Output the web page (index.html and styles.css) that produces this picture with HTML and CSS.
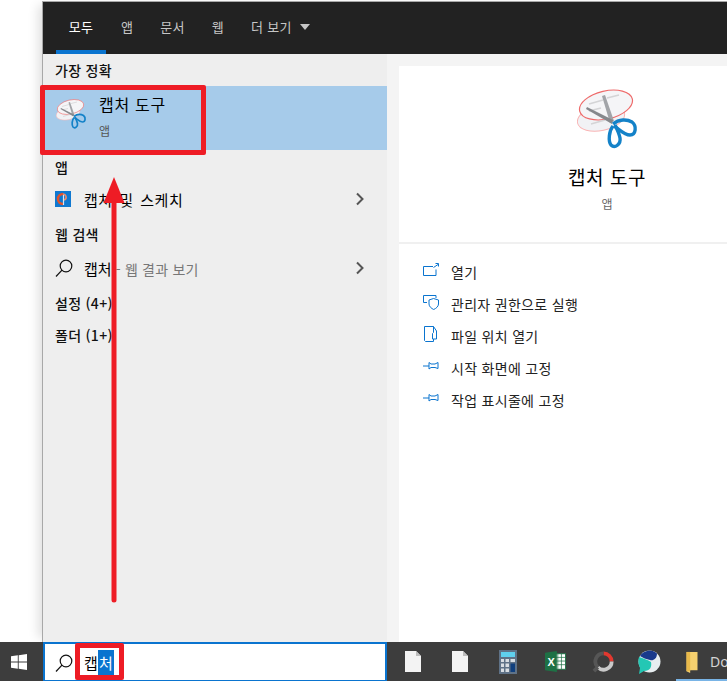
FILE: index.html
```html
<!DOCTYPE html>
<html lang="ko">
<head>
<meta charset="utf-8">
<title>캡처 도구</title>
<link rel="stylesheet" href="styles.css">
</head>
<body>
<svg width="0" height="0" class="defs">
  <defs>
    <symbol id="snip" viewBox="0 0 62 62">
      <ellipse cx="24" cy="29" rx="24" ry="12.500" transform="rotate(-12 24 29)" fill="#f1f2f5" stroke="#f9b4b4" stroke-width="1"/>
      <ellipse cx="29" cy="16" rx="27" ry="14" transform="rotate(-13 29 16)" fill="#f5f5f7" stroke="#ee6a6a" stroke-width="1.200"/>
      <path d="M12 15 26 11M30 9 42 6M12 22 24 19M14 35 28 31" stroke="#d4d4d6" stroke-width="1.500" fill="none"/>
      <path d="M25 7 28 6 37 32 33 34Z" fill="#a2a4a8"/>
      <path d="M9 20 10 18 36 31 35 35Z" fill="#86888c"/>
      <path d="M36 35C42 30 50 30 55 33 60 37 59 46 53 46 47 46 42 40 37 37" fill="none" stroke="#1482c8" stroke-width="3.400"/>
      <path d="M36 37C32 42 31 52 34 56 38 60 44 55 43 49 42 44 40 40 38 36" fill="none" stroke="#1482c8" stroke-width="3.400"/>
    </symbol>
    <symbol id="glass" viewBox="0 0 18 18">
      <circle cx="11" cy="7" r="5.800" fill="none" stroke="currentColor" stroke-width="1.200"/>
      <path d="M7 11.200 1 17.500" fill="none" stroke="currentColor" stroke-width="1.200"/>
    </symbol>
    <symbol id="chev" viewBox="0 0 10 14">
      <path d="M2 1.500 7.500 7 2 12.500" fill="none" stroke="currentColor" stroke-width="2"/>
    </symbol>
    <symbol id="pin" viewBox="0 0 16 16">
      <path d="M0 8H6M6 4.500 8 6H12L15 4.500V10.500L12 9.500H8L6 11Z" fill="none" stroke="currentColor" stroke-width="1"/>
    </symbol>
    <symbol id="doc" viewBox="0 0 16 21">
      <path d="M0 0H11L16 5V21H0Z" fill="#f3f3f3"/>
      <path d="M11 0 16 5H11Z" fill="#bdbdbd"/>
    </symbol>
  </defs>
</svg>

<div class="stage">
  <div class="margin"></div>
  <main class="panel">
    <nav class="tabs">
      <a class="tab tab-on">모두</a>
      <a class="tab">앱</a>
      <a class="tab">문서</a>
      <a class="tab">웹</a>
      <a class="tab">더 보기 <span class="caret"></span></a>
    </nav>
    <div class="panes">
      <section class="results">
        <h2 class="head head-first">가장 정확</h2>
        <div class="best">
          <svg class="best-icon"><use href="#snip"/></svg>
          <div class="best-text">
            <div class="best-name">캡처 도구</div>
            <div class="best-kind">앱</div>
          </div>
        </div>
        <h2 class="head head-app">앱</h2>
        <div class="row">
          <svg class="sketch" viewBox="0 0 16 16">
            <rect width="16" height="16" fill="#0f78d0"/>
            <path d="M8 3A5 5 0 0 0 8 13" fill="none" stroke="#e2522b" stroke-width="2.400"/>
            <path d="M8 3C12 4 12 8 9 9" fill="none" stroke="#f08a6a" stroke-width="1.600"/>
            <path d="M8.500 4V14" stroke="#d6e6f4" stroke-width="1.200"/>
          </svg>
          <span class="row-text">캡처 및 스케치</span>
          <svg class="chev"><use href="#chev"/></svg>
        </div>
        <h2 class="head head-web">웹 검색</h2>
        <div class="row row-web">
          <svg class="glass"><use href="#glass"/></svg>
          <span class="row-text row-text-web">캡처<span class="dim"> - 웹 결과 보기</span></span>
          <svg class="chev"><use href="#chev"/></svg>
        </div>
        <h2 class="head head-set">설정 (4+)</h2>
        <h2 class="head head-dir">폴더 (1+)</h2>
      </section>
      <aside class="detail">
        <svg class="detail-icon"><use href="#snip"/></svg>
        <div class="detail-name">캡처 도구</div>
        <div class="detail-kind">앱</div>
        <div class="rule"></div>
        <ul class="actions">
          <li class="action">
            <svg class="act-icon" viewBox="0 0 16 16"><path d="M10 4.500H.5V13.500H13V7.500M10.500 5.500 15 2.500M12.500 1.500H15.500V4.500" fill="none" stroke="currentColor"/></svg>
            <span>열기</span>
          </li>
          <li class="action">
            <svg class="act-icon" viewBox="0 0 16 16"><path d="M4 8.500H.5V1.500H13V4M6 6 10.500 4.500 15.500 6V10C15.500 12.500 13 14.500 10.700 15.500 8.500 14.500 6 12.500 6 10Z" fill="none" stroke="currentColor"/></svg>
            <span>관리자 권한으로 실행</span>
          </li>
          <li class="action">
            <svg class="act-icon" viewBox="0 0 16 16"><path d="M1.500 .5H10.500L13.500 5V13L10.500 13V15.500H2.500L1.500 14.500ZM10.500 .5V6.500L9.500 7.500V13H10.500" fill="none" stroke="currentColor"/></svg>
            <span>파일 위치 열기</span>
          </li>
          <li class="action">
            <svg class="act-icon"><use href="#pin"/></svg>
            <span>시작 화면에 고정</span>
          </li>
          <li class="action">
            <svg class="act-icon"><use href="#pin"/></svg>
            <span>작업 표시줄에 고정</span>
          </li>
        </ul>
      </aside>
    </div>
  </main>
</div>

<footer class="taskbar">
  <div class="start">
    <svg class="win" viewBox="0 0 16 16"><path d="M0 2.300 6.800 1.300V7.500H0ZM7.700 1.200 16 0V7.500H7.700ZM0 8.400H6.800V14.700L0 13.700ZM7.700 8.400H16V16L7.700 14.800Z" fill="#fff"/></svg>
  </div>
  <div class="search">
    <svg class="glass glass-bar"><use href="#glass"/></svg>
    <span class="query">캡<span class="sel">처</span></span>
  </div>
  <div class="apps">
    <svg class="app app-doc"><use href="#doc"/></svg>
    <svg class="app app-doc"><use href="#doc"/></svg>
    <svg class="app app-calc" viewBox="0 0 18 24">
      <rect width="18" height="24" fill="#5f7287"/>
      <rect x="2" y="2" width="14" height="5" fill="#5fd0ee"/>
      <path d="M2 9H5V12H2ZM6.500 9H10V12H6.500ZM11.500 9H16V12H11.500ZM2 13.500H5V17H2ZM6.500 13.500H10V17H6.500ZM2 18.500H5V22H2ZM6.500 18.500H10V22H6.500Z" fill="#d8dde2"/>
      <rect x="11.500" y="13.500" width="4.500" height="8.500" fill="#103f7d"/>
    </svg>
    <svg class="app app-xl" viewBox="0 0 23 23">
      <rect x="8" y="3" width="14.500" height="17" fill="#fff" stroke="#1e7145"/>
      <path d="M14 3V20M18 3V20M9 7H22M9 11H22M9 15H22" stroke="#1e7145" stroke-width=".8"/>
      <path d="M0 2 13 0V23L0 21Z" fill="#1e7145"/>
      <text x="2.800" y="16" class="xl-x">X</text>
    </svg>
    <svg class="app app-ring" viewBox="0 0 24 24">
      <path d="M12 3.500A8.500 8.500 0 0 1 20.500 12" fill="none" stroke="#e2382f" stroke-width="4"/>
      <path d="M20.500 12A8.500 8.500 0 0 1 6 18" fill="none" stroke="#c9c9c9" stroke-width="4"/>
      <path d="M6 18A8.500 8.500 0 0 1 12 3.500M6 18 2 22" fill="none" stroke="#565656" stroke-width="4"/>
    </svg>
    <svg class="app app-whale" viewBox="0 0 24 24">
      <circle cx="12.500" cy="11.500" r="11" fill="#e8eef0"/>
      <path d="M3 6A11 11 0 0 1 20 3.500C20 9 16 11 13 10 9 9 6 8 3 6Z" fill="#1a3a8c"/>
      <path d="M2 7C6 8 11 10 14 12 15 17 13 21 7 21L2 24 3 18C1 14 1 10 2 7Z" fill="#24c7b4"/>
    </svg>
    <svg class="app app-folder" viewBox="0 0 14 24">
      <path d="M1 1H13V21H5V24L1 22Z" fill="#f5d06f"/>
      <path d="M1 1H5V22L1 22Z" fill="#e8b94a"/>
    </svg>
    <span class="dow">Dow</span>
    <span class="dow-line"></span>
  </div>
</footer>

<div class="mark mark-best"></div>
<div class="mark mark-query"></div>
<svg class="arrow" viewBox="0 0 22 426">
  <path d="M11 20V423" stroke="#ee1c25" stroke-width="5" stroke-linecap="round" fill="none"/>
  <path d="M11 0 21.500 26H.5Z" fill="#ee1c25"/>
</svg>
</body>
</html>
```

FILE: styles.css
```css
* { box-sizing: border-box; }
html, body { margin: 0; padding: 0; }
body {
  width: 727px;
  height: 681px;
  overflow: hidden;
  background: #fff;
  position: relative;
  display: flex;
  flex-direction: column;
  font-family: "Noto Sans CJK KR", "Noto Sans", sans-serif;
  color: #000;
}
.defs { position: absolute; }
.stage { flex: 1; display: flex; min-height: 0; }
.margin { width: 42px; flex: none; }
.panel {
  flex: 1;
  min-width: 0;
  display: flex;
  flex-direction: column;
  margin-top: 1px;
  border-left: 1px solid #a8a8a8;
  border-top: 1px solid #a8a8a8;
  box-shadow: -8px 0 10px -4px rgba(0,0,0,.12);
}
.tabs {
  height: 52px;
  flex: none;
  background: #222;
  display: flex;
  gap: 27px;
  padding-left: 13px;
}
.tab {
  height: 52px;
  font-size: 13px;
  line-height: 50px;
  color: #c6c6c6;
  letter-spacing: .3px;
  white-space: nowrap;
}
.tab-on {
  color: #fff;
  width: 50px;
  text-align: center;
  margin-right: -12px;
  border-bottom: 4px solid #0a74cf;
}
.caret {
  display: inline-block;
  width: 0;
  height: 0;
  margin-left: 4px;
  vertical-align: 2px;
  border-left: 5px solid transparent;
  border-right: 5px solid transparent;
  border-top: 6px solid #c6c6c6;
}
.panes { flex: 1; display: flex; min-height: 0; background: #f4f4f4; overflow: hidden; }
.results { width: 344px; flex: none; background: #eee; }
.head {
  margin: 0;
  font-size: 14px;
  font-weight: 500;
  line-height: 20px;
  padding-left: 12px;
  color: #111;
  letter-spacing: .3px;
}
.head-first { padding-top: 6px; height: 32px; }
.best {
  height: 64px;
  background: #a6cbea;
  display: flex;
  padding-left: 13px;
}
.best-icon { width: 31px; height: 31px; margin-top: 13px; flex: none; }
.best-text { margin-left: 12px; }
.best-name { font-size: 16px; line-height: 22px; margin-top: 7px; letter-spacing: .7px; }
.best-kind { font-size: 12px; line-height: 18px; margin-top: 7px; color: #555; }
.head-app { margin-top: 7px; }
.row { height: 44px; display: flex; align-items: center; padding-left: 12px; }
.sketch { width: 16px; height: 16px; flex: none; }
.row-text { font-size: 15px; margin-left: 13px; flex: 1; letter-spacing: .5px; word-spacing: 2px; }
.row-text-web { margin-left: 11px; letter-spacing: 0; word-spacing: 0; }
.dim { font-size: 14px; color: #777; letter-spacing: .2px; word-spacing: 0; }
.chev { width: 10px; height: 14px; margin-right: 22px; color: #555; flex: none; }
.head-web { height: 27px; padding-top: 3px; }
.row-web { height: 40px; }
.glass { width: 18px; height: 18px; flex: none; color: #111; }
.head-set { height: 33px; padding-top: 5px; }
.head-dir { height: 32px; padding-top: 4px; }
.detail {
  width: 416px;
  flex: none;
  margin: 12px 0 0 12px;
  background: #fff;
  display: flex;
  flex-direction: column;
  align-items: center;
}
.detail-icon { width: 62px; height: 62px; margin-top: 23px; margin-left: 2px; flex: none; }
.detail-name { font-size: 19px; line-height: 26px; margin-top: 13px; letter-spacing: .6px; }
.detail-kind { font-size: 12px; line-height: 18px; margin-top: 5px; color: #666; }
.rule { width: 100%; height: 2px; background: #f0f0f0; margin-top: 29px; flex: none; }
.actions { list-style: none; margin: 12px 0 0; padding: 0 0 0 24px; width: 100%; }
.action { height: 32px; display: flex; align-items: center; font-size: 14px; color: #222; letter-spacing: .3px; }
.act-icon { width: 16px; height: 16px; color: #0a74cf; margin-right: 12px; flex: none; position: relative; top: -2px; }
.taskbar {
  height: 39px;
  flex: none;
  background: #3d3d3d;
  display: flex;
}
.start { width: 43px; display: flex; align-items: center; justify-content: center; flex: none; }
.win { width: 16px; height: 16px; margin-right: 5px; }
.search {
  width: 344px;
  flex: none;
  background: #fff;
  border: 2px solid #0a74cf;
  border-bottom-width: 1px;
  display: flex;
  align-items: center;
  padding-left: 10px;
}
.glass-bar { margin-top: 1px; }
.query { margin-left: 11px; font-size: 15px; line-height: 25px; display: flex; }
.sel { display: block; background: #0a74cf; color: #fff; height: 25px; line-height: 25px; width: 16px; text-align: center; }
.apps { flex: 1; display: flex; align-items: center; position: relative; padding-left: 18px; min-width: 0; }
.app { flex: none; }
.app-doc { width: 16px; height: 21px; margin-right: 31px; }
.app-calc { width: 18px; height: 24px; margin-right: 27px; }
.app-xl { width: 23px; height: 21px; margin-right: 25px; }
.app-ring { width: 23px; height: 23px; margin-right: 22px; }
.app-whale { width: 24px; height: 24px; margin-right: 24px; }
.app-folder { width: 14px; height: 22px; margin-right: 11px; }
.dow { font-family: "Noto Sans", sans-serif; font-size: 14px; color: #d4d4d4; white-space: nowrap; }
.dow-line { position: absolute; left: 289px; right: 0; bottom: 0; height: 2px; background: #79b4e6; }
.xl-x { font-family: "Liberation Sans", sans-serif; font-size: 12px; font-weight: 700; fill: #fff; }
.mark {
  position: absolute;
  border: 5px solid #ee1c25;
  border-radius: 2px;
  pointer-events: none;
}
.mark-best { left: 40px; top: 85px; width: 166px; height: 70px; }
.mark-query { left: 75px; top: 643px; width: 49px; height: 37px; }
.arrow { position: absolute; left: 103px; top: 177px; width: 22px; height: 426px; }
```
